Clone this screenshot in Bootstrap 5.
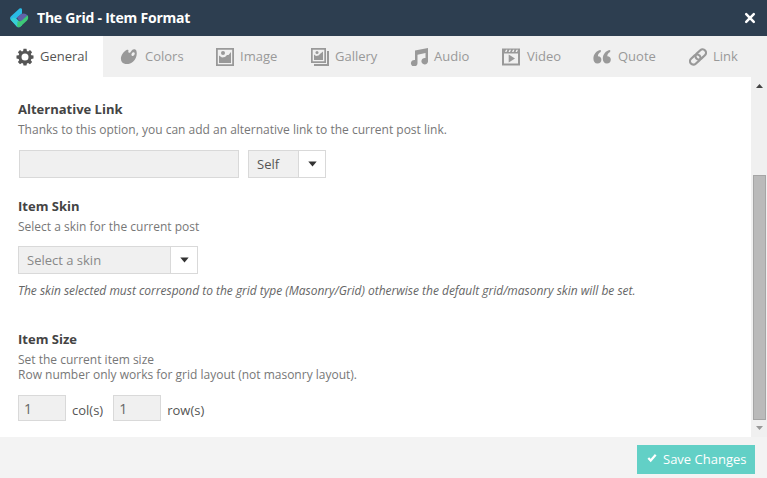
<!DOCTYPE html>
<html lang="en">
<head>
<meta charset="utf-8">
<meta name="viewport" content="width=device-width, initial-scale=1">
<title>The Grid - Item Format</title>
<link href="https://cdn.jsdelivr.net/npm/bootstrap@5.3.0/dist/css/bootstrap.min.css" rel="stylesheet">
<style>
body{font-family:"Open Sans",sans-serif;font-size:13px;line-height:18px;color:#555;height:478px;overflow:hidden;background:#fff}
.titlebar{height:36px;background:#2d3e50;color:#fff;padding:0 11px 0 9px}
.titlebar h1{font-size:14px;line-height:36px;font-weight:700;letter-spacing:-.22px;margin-left:8px}
.close-x{background:none;border:0;padding:0;color:#fff}
.tabs{height:41px;background:#f0f0f0;flex-wrap:nowrap}
.tabs .nav-link{height:41px;padding:0 0 0 16px;color:#999;gap:6px;border-radius:0;white-space:nowrap}
.tabs .nav-link span{padding-bottom:2px}
.tabs .nav-link.active{background:#fff;color:#555}
.tabs svg{width:18px;height:18px;flex:none;fill:currentColor}
.w-general{width:103px}.w-colors{width:98px}.w-image{width:94px}.w-gallery{width:99px}
.w-audio{width:92px}.w-video{width:91px}.w-quote{width:96px}.w-link{width:94px}
.tabs .w-colors{padding-left:17px;gap:7px}
.tabs .w-image{padding-left:15px}
.tabs .w-video,.tabs .w-quote{gap:7px}
.panel{height:360px}
.options{padding:23px 18px 0}
.options h2{font-size:13px;line-height:18px;font-weight:700;color:#444;margin:0 0 4px}
.desc{font-size:12px;line-height:15px;color:#777;margin:0}
.box{height:28px;background:#f0f0f0;border:1px solid #d9d9d9;border-radius:0;padding:0 8px;font-size:13px;color:#555;line-height:26px}
.box:focus{background:#f0f0f0;box-shadow:none}
.url{width:220px;margin-left:1px}
.picker{padding:0;text-align:left;display:flex}
.picker .val{padding-left:8px;flex:1}
.picker .drop{width:27px;background:#fff;border-left:1px solid #d9d9d9;display:flex;align-items:center;justify-content:center}
.self{width:78px;margin-left:9px}
.skin{width:180px}
.skin .val{color:#888}
.num{width:48px;height:26px;padding:0 5px;font-size:14px;line-height:24px;color:#666}
.num:nth-of-type(n+2){margin-left:10px}
.unit{margin-left:6px;line-height:18px;padding-bottom:2px}
.sec-link{height:97px}.sec-skin{height:133px}
.m-row{margin-top:13px}
.skin.m-row{margin-top:12px}
.note{font-size:12px;line-height:16px;font-style:italic;color:#666;letter-spacing:-.016px;margin:9px 0 0}
.rail{width:16px;background:#f0f0f0;padding:7px 1px 7px 2px}
.thumb{width:13px;height:245px;background:#bababa;border:1px solid #a5a5a5;margin-top:87px}
.foot{height:41px;background:#f3f3f3;padding:8px 12px 0 0}
.save{background:#62d0c6;color:#fff;border:0;border-radius:0;height:29px;width:118px;padding:0 0 0 10px;font-size:13px;line-height:29px;gap:6px}
.save svg{margin-bottom:3px}
</style>
</head>
<body>
<header class="titlebar d-flex align-items-center">
  <svg width="20" height="20" viewBox="0 0 20 20"><path d="M10.500.6 2 8.300c-1.200 1.100-1.200 2.400-.3 3.500l6.200 6.700L12 15 7.200 10.500 13 5.500V1.300C12.800.2 11.500-.2 10.500.6Z" fill="#2abbe6"/><path d="m1.500 11.500 6.200 6.900c1 1.100 2.500 1.200 3.500.3l2-1.800-6-6.400-2.700-1Z" fill="#37d0d6"/><path d="M7.800 9.500 12 6.300c2.200-1.600 5-.8 6.600 1.300L13 13.500l-3-1Z" fill="#5f62a8"/><path d="m8.500 13.500 3.700-.5 6.400-5.800c1 1.900.8 4-.8 5.500l-6.300 5.800c-1 .9-2.500.8-3.400-.1Z" fill="#3fc878"/></svg>
  <h1 class="mb-0">The Grid - Item Format</h1>
  <button class="close-x ms-auto d-flex" aria-label="Close"><svg width="12" height="12" viewBox="0 0 12 12"><path d="m2.200 2.200 7.600 7.600m0-7.600-7.600 7.600" stroke="#fff" stroke-width="2.500" stroke-linecap="round"/></svg></button>
</header>
<nav class="nav tabs">
  <a class="nav-link active d-flex align-items-center w-general"><svg viewBox="0 0 18 18"><path fill-rule="evenodd" d="M7.500.7h3l.4 2.200 1.200.5 1.900-1.300 2.100 2.100L14.800 6l.5 1.200 2.200.4v3l-2.200.4-.5 1.200 1.300 1.900-2.100 2.100-1.900-1.300-1.200.5-.4 2.200h-3l-.4-2.200-1.200-.5L4 16.200l-2.100-2.100 1.300-1.900-.5-1.200-2.200-.4v-3l2.200-.4L3.200 6 1.900 4.200 4 2.100l1.900 1.300 1.200-.5ZM9 5.600a3.500 3.500 0 1 0 0 7 3.500 3.500 0 0 0 0-7Z"/></svg><span>General</span></a>
  <a class="nav-link d-flex align-items-center w-colors"><svg viewBox="0 0 18 18"><path fill-rule="evenodd" d="M7 1.800C8.200 1.300 8.700 2 8.400 3c-.4 1.500.2 2 1.300 1.700 1-.3 1.300-1.500 2-2.300C13.200.8 16 .8 16.500 3.200c.9 3.700-.5 7.800-3.500 10.500-3.300 3-8.800 3.200-11.100.3C-.6 10.500 2 4.200 7 1.800ZM13.300 4.200c-1.600.3-2.500 2.700-1.400 3.500 1.200.8 3.100-.8 2.800-2.500-.2-.8-.6-1.100-1.400-1Z"/></svg><span>Colors</span></a>
  <a class="nav-link d-flex align-items-center w-image"><svg viewBox="0 0 18 18"><path fill-rule="evenodd" d="M0 0h18v18H0ZM1.800 1.800v14.400h14.400V1.800Z"/><path d="M3 7.500 6 9.500l3-.5 2-2h1.500L15 4v11H3Z"/><circle cx="7" cy="5" r="2"/></svg><span>Image</span></a>
  <a class="nav-link d-flex align-items-center w-gallery"><svg viewBox="0 0 18 18"><path fill-rule="evenodd" d="M0 0h15v15H0ZM1.700 1.700v11.600h11.600V1.700Z"/><path d="M3 6.500 5 8l2.500-.5 2-2L12 3.500v8.500H3Z"/><circle cx="6" cy="4.400" r="1.500"/><path d="M16 3h2v15H3v-2h13Z"/></svg><span>Gallery</span></a>
  <a class="nav-link d-flex align-items-center w-audio"><svg viewBox="0 0 18 18"><path d="M5 2.500 18 0v13a3.300 3.300 0 1 1-2.500-3V5L7.500 6.700V15A3.300 3.300 0 1 1 5 12Z"/></svg><span>Audio</span></a>
  <a class="nav-link d-flex align-items-center w-video"><svg viewBox="0 0 18 18"><path fill-rule="evenodd" d="M0 .5h18v17H0ZM2 5.500v10h14v-10ZM4 1.700 3 4h1.500l1-2.300Zm3.500 0-1 2.300H8l1-2.300Zm3.500 0L10 4h1.500l1-2.300Zm3.500 0-1 2.300H15l1-2.300Z"/><path d="m6.700 6.500 6.300 4-6.300 4Z"/></svg><span>Video</span></a>
  <a class="nav-link d-flex align-items-center w-quote"><svg viewBox="0 0 18 18"><path id="q" d="M7.800 2v2C5.800 5 5 6.200 4.900 8.200c2.200 0 3.500 1.400 3.500 3.500s-1.500 3.800-3.900 3.800C1.700 15.500.4 13.400.4 10.500.4 6.400 3.300 2.600 7.800 2Z"/><use href="#q" x="9.400"/></svg><span>Quote</span></a>
  <a class="nav-link d-flex align-items-center w-link"><svg viewBox="0 0 18 18"><g transform="rotate(-43 9 9)" fill="none" stroke="currentColor" stroke-width="2.200"><rect x="-.7" y="5.600" width="11.800" height="6.800" rx="3.400"/><rect x="6.900" y="5.600" width="11.800" height="6.800" rx="3.400"/></g></svg><span>Link</span></a>
</nav>
<main class="panel d-flex">
  <div class="options flex-grow-1">
    <section class="sec-link">
      <h2>Alternative Link</h2>
      <p class="desc">Thanks to this option, you can add an alternative link to the current post link.</p>
      <div class="d-flex m-row"><input class="form-control box url" aria-label="Alternative link"><button class="box picker self"><span class="val">Self</span><span class="drop"><svg width="9" height="6" viewBox="0 0 9 6"><path d="M.3.500h8.400L4.500 5.500Z" fill="#333"/></svg></span></button></div>
    </section>
    <section class="sec-skin">
      <h2>Item Skin</h2>
      <p class="desc">Select a skin for the current post</p>
      <button class="box picker skin m-row"><span class="val">Select a skin</span><span class="drop"><svg width="9" height="6" viewBox="0 0 9 6"><path d="M.3.500h8.400L4.500 5.500Z" fill="#333"/></svg></span></button>
      <p class="note">The skin selected must correspond to the grid type (Masonry/Grid) otherwise the default grid/masonry skin will be set.</p>
    </section>
    <section>
      <h2>Item Size</h2>
      <p class="desc">Set the current item size<br>Row number only works for grid layout (not masonry layout).</p>
      <div class="d-flex align-items-end m-row"><input class="form-control box num" value="1" aria-label="Columns"><span class="unit">col(s)</span><input class="form-control box num" value="1" aria-label="Rows"><span class="unit">row(s)</span></div>
    </section>
  </div>
  <div class="rail d-flex flex-column align-items-center">
    <svg width="9" height="4" viewBox="0 0 9 4"><path d="M1 4h7L4.500 0Z" fill="#444"/></svg>
    <div class="thumb"></div>
    <svg class="mt-auto" width="9" height="4" viewBox="0 0 9 4"><path d="M1 0h7L4.500 4Z" fill="#999"/></svg>
  </div>
</main>
<footer class="foot d-flex justify-content-end">
  <button class="btn save d-flex align-items-center"><svg width="10" height="10" viewBox="0 0 10 10"><path d="m1.300 5 2.400 2.500L8.700 1.800" fill="none" stroke="#fff" stroke-width="2.200"/></svg>Save Changes</button>
</footer>
<script src="https://cdn.jsdelivr.net/npm/bootstrap@5.3.0/dist/js/bootstrap.bundle.min.js"></script>
</body>
</html>
